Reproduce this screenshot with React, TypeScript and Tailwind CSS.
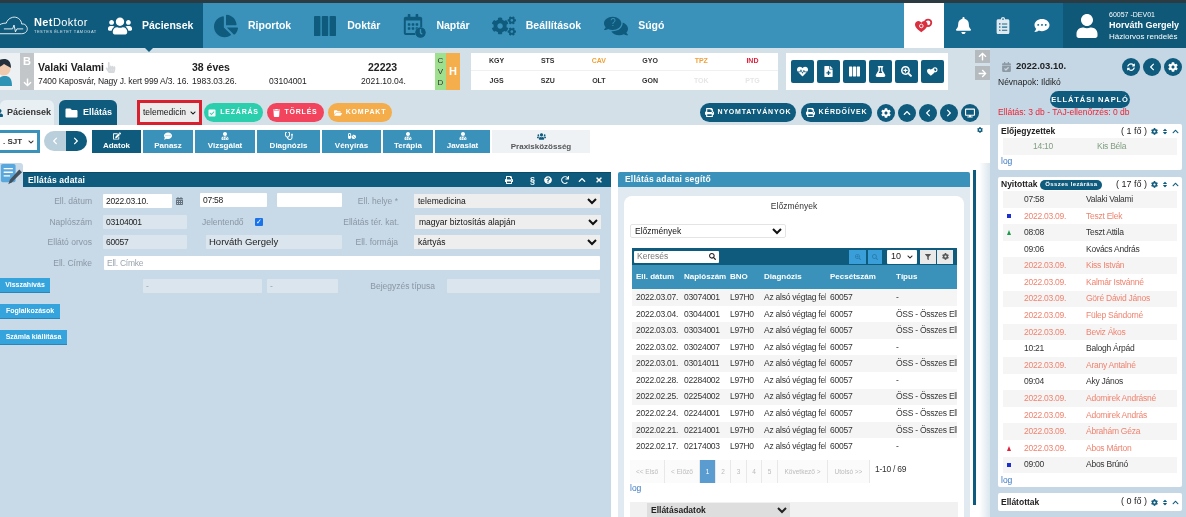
import {
  FaArrowDown,
  FaArrowRight,
  FaArrowUp,
  FaBell,
  FaCalendarAlt,
  FaCalendarCheck,
  FaChartPie,
  FaCheckSquare,
  FaChevronDown,
  FaChevronLeft,
  FaChevronRight,
  FaChevronUp,
  FaClipboardList,
  FaClock,
  FaCog,
  FaCogs,
  FaCommentDots,
  FaComments,
  FaDesktop,
  FaEdit,
  FaFileMedical,
  FaFilter,
  FaFlask,
  FaFolder,
  FaFolderOpen,
  FaHandPointer,
  FaHeartbeat,
  FaPills,
  FaPrint,
  FaQuestionCircle,
  FaRedo,
  FaRegCalendarAlt,
  FaSearch,
  FaSearchPlus,
  FaSort,
  FaStethoscope,
  FaSyncAlt,
  FaTimes,
  FaTrash,
  FaUser,
  FaUserMd,
  FaUsers,
} from "react-icons/fa";

const small = "text-[8.500px] tracking-[-0.25px]";

function Binders({ className }: { className?: string }) {
  return (
    <svg viewBox="0 0 24 24" className={className} fill="currentColor">
      <rect x="0" y="1" width="7" height="22" rx="1" />
      <rect x="8.5" y="1" width="7" height="22" rx="1" />
      <rect x="17" y="1" width="7" height="22" rx="1" />
    </svg>
  );
}

function Hearts({ className }: { className?: string }) {
  return (
    <svg viewBox="0 0 20 16" className={className} fill="currentColor">
      <path d="M7 15.500 C2 12 0 9.500 0 7 C0 4.500 2 3 3.800 3 C5.200 3 6.300 3.800 7 5 C7.700 3.800 8.800 3 10.200 3 C12 3 14 4.500 14 7 C14 9.500 12 12 7 15.500 Z" />
      <circle cx="14.500" cy="5" r="3.600" fill="none" stroke="currentColor" strokeWidth="2" />
      <circle cx="7" cy="8.500" r="2" fill="none" stroke="#fff" strokeWidth="1" />
    </svg>
  );
}

function NotesIcon() {
  return (
    <svg viewBox="0 0 24 24" className="w-[22px] h-[22px]">
      <rect x="1" y="0" width="16" height="20" rx="2" fill="#58a7dd" />
      <path d="M4 5 H14 M4 9 H14 M4 13 H11" stroke="#fff" strokeWidth="1.500" />
      <path d="M9 22 L11 17 L21 6 L24 9 L13 20 Z" fill="#44525e" />
    </svg>
  );
}

function Logo() {
  return (
    <div className="flex items-center w-[108px] text-white">
      <svg viewBox="0 0 30 24" className="w-[29px] h-[26px] shrink-0" fill="none" stroke="currentColor" strokeWidth="0.9">
        <path d="M-2 20 H22 C27 20 29 16.500 28 13.500 C27 10.500 24.500 9.500 22.500 10 C22 5 17.500 2 13 3 C9 4 7 7 6.500 9 C3 9 0 10 -2 12" />
        <path d="M4 15 H13 L14.500 11 L16 18 L17.500 15 H24" />
      </svg>
      <div className="ml-[5px] leading-none">
        <div className="text-[11px] tracking-[0.4px]">
          <span className="font-bold">Net</span>Doktor
        </div>
        <div className="text-[4px] tracking-[0.5px] mt-[2px] opacity-80 whitespace-nowrap">TESTES ÉLETET TÁMOGAT</div>
      </div>
    </div>
  );
}

function NavItem({ icon, label }: { icon: React.ReactNode; label: string }) {
  return (
    <div className="flex items-center text-[#0f5b7d]">
      <div className="w-[24px] flex justify-center">{icon}</div>
      <span className="ml-[10px] text-[10.500px] font-bold text-white">{label}</span>
    </div>
  );
}

function TopNav() {
  return (
    <header className="h-[48px] shrink-0 border-t-[3px] border-[#2c3a42] flex bg-[#3a92ba]">
      <div className="relative w-[203px] flex items-center bg-[#0f5b7d]">
        <Logo />
        <div className="flex items-center text-white">
          <FaUsers className="w-[24px] h-[24px]" />
          <span className="ml-[10px] text-[10.500px] font-bold">Páciensek</span>
        </div>
        <div className="absolute left-[145px] -bottom-[4px] w-0 h-0 border-x-[4px] border-x-transparent border-t-[4px] border-t-[#0f5b7d]" />
      </div>
      <nav className="flex items-center gap-[22px] pl-[11px] flex-1">
        <NavItem icon={<FaChartPie className="w-[24px] h-[24px]" />} label="Riportok" />
        <NavItem icon={<Binders className="w-[22px] h-[24px]" />} label="Doktár" />
        <NavItem
          icon={
            <span className="relative block w-[23px] h-[24px]">
              <FaRegCalendarAlt className="w-[20px] h-[21px]" />
              <FaClock className="absolute right-0 bottom-0 w-[11px] h-[11px] bg-[#3a92ba] rounded-full" />
            </span>
          }
          label="Naptár"
        />
        <NavItem icon={<FaCogs className="w-[24px] h-[24px]" />} label="Beállítások" />
        <div className="ml-[1px]">
          <NavItem
            icon={
              <span className="relative block">
                <FaComments className="w-[24px] h-[24px]" />
                <span className="absolute left-[6px] top-[3px] text-[10px] leading-[12px] text-[#3a92ba]">?</span>
              </span>
            }
            label="Súgó"
          />
        </div>
      </nav>
      <div className="w-[40px] bg-white flex items-center justify-center text-[#d9303f]">
        <Hearts className="w-[18px] h-[15px]" />
      </div>
      <div className="w-[119px] bg-[#176a8f] flex items-center text-white">
        <FaBell className="ml-[12px] w-[15px] h-[17px]" />
        <FaClipboardList className="ml-[25px] w-[14px] h-[17px] text-[#dfe9ef]" />
        <FaCommentDots className="ml-[24px] w-[16px] h-[15px]" />
      </div>
      <div className="w-[123px] bg-[#0f5878] flex items-center text-white">
        <FaUser className="ml-[12px] w-[24px] h-[24px] shrink-0" />
        <div className="ml-[10px] leading-none whitespace-nowrap pt-[1px]">
          <div className="text-[7px]">60057 -DEV01</div>
          <div className="text-[9px] font-bold mt-[3px]">Horváth Gergely</div>
          <div className="text-[8px] mt-[3px]">Háziorvos rendelés</div>
        </div>
      </div>
    </header>
  );
}

function Avatar() {
  return (
    <svg viewBox="0 0 20 37" className="w-[20px] h-[37px] shrink-0 bg-[#eef1f3]">
      <path d="M-3 33 C-3 25 1 23 5 23 C9 23 12 25 12 33 Z" fill="#2f93b5" />
      <circle cx="4" cy="16" r="6.500" fill="#f1c9ac" />
      <path d="M-3 15 C-3 7 0 6 4 6 C8 6 11 8 11 15 C9 14 6 12 4 11 C2 13 0 14 -3 15 Z" fill="#23303c" />
    </svg>
  );
}

function PatientStrip() {
  const topRow = [
    ["KGY", "text-[#333]"],
    ["STS", "text-[#333]"],
    ["CAV", "text-[#f0a13a]"],
    ["GYO", "text-[#333]"],
    ["TPZ", "text-[#f0a13a]"],
    ["IND", "text-[#e01f3a]"],
  ];
  const bottomRow = [
    ["JGS", "text-[#333]"],
    ["SZU", "text-[#333]"],
    ["OLT", "text-[#333]"],
    ["GON", "text-[#333]"],
    ["TOK", "text-[#e6e6e6]"],
    ["PTG", "text-[#e6e6e6]"],
  ];
  const tools = [FaHeartbeat, FaFileMedical, Binders, FaFlask, FaSearchPlus, Hearts];
  return (
    <div className="h-[46px] shrink-0 pt-[5px] flex bg-[#d3e0e8]">
      <div className="h-[37px] flex">
        <Avatar />
        <div className="w-[14px] bg-[#c3c6c8] flex flex-col items-center text-white">
          <span className="text-[11px] font-bold mt-[3px] leading-none">B</span>
          <FaArrowDown className="w-[9px] h-[9px] mt-[11px]" />
        </div>
        <div className="w-[401px] bg-white text-[#222] pl-[4px] pt-[8px]">
          <div className="flex text-[10.500px] font-bold leading-[13px]">
            <span className="w-[154px] flex items-center">
              Valaki Valami
              <FaHandPointer className="ml-[1px] w-[11px] h-[11px] text-[#d5d9dc]" />
            </span>
            <span className="w-[176px]">38 éves</span>
            <span>22223</span>
          </div>
          <div className="flex text-[8.500px] leading-[12px] mt-[1px] whitespace-nowrap">
            <span className="w-[151px] mr-[3px] overflow-hidden tracking-[-0.1px]">7400 Kaposvár, Nagy J. kert 999 A/3. 16.,</span>
            <span className="w-[77px]">1983.03.26.</span>
            <span className="w-[92px]">03104001</span>
            <span>2021.10.04.</span>
          </div>
        </div>
        <div className="w-[11px] bg-[#9fe08f] text-[#333] text-[8px] leading-[11px] flex flex-col items-center pt-[2px]">
          <span>C</span>
          <span>V</span>
          <span>D</span>
        </div>
        <div className="w-[14px] bg-[#f4ae4c] text-white text-[11px] font-bold flex items-center justify-center">H</div>
      </div>
      <div className="ml-[11px] w-[307px] h-[37px] bg-white flex flex-col text-[7px] font-bold">
        {[topRow, bottomRow].map((row, i) => (
          <div key={i} className={`h-[18px] grid grid-cols-6 items-center text-center ${i === 0 ? "border-b border-[#eef1f3]" : "mt-[1px]"}`}>
            {row.map(([label, color]) => (
              <span key={label} className={color}>
                {label}
              </span>
            ))}
          </div>
        ))}
      </div>
      <div className="ml-[8px] w-[162px] h-[37px] bg-white flex items-center gap-[3px] pl-[5px]">
        {tools.map((Icon, i) => (
          <div key={i} className="w-[23px] h-[23px] rounded-[2px] bg-[#0f5b7d] text-white flex items-center justify-center">
            <Icon className="w-[11px] h-[11px]" />
          </div>
        ))}
      </div>
      <div className="ml-[27px] w-[15px] flex flex-col gap-[3px] -mt-[3px]">
        <div className="h-[13px] bg-[#b4babd] text-white flex items-center justify-center">
          <FaArrowUp className="w-[9px] h-[9px]" />
        </div>
        <div className="h-[14px] bg-[#b4babd] text-white flex items-center justify-center">
          <FaArrowRight className="w-[9px] h-[9px]" />
        </div>
      </div>
    </div>
  );
}

function Pill({ color, icon, label, width }: { color: string; icon: React.ReactNode; label: string; width: string }) {
  return (
    <div className={`h-[19px] rounded-full flex items-center justify-center gap-[4px] text-white text-[7px] font-bold tracking-[0.8px] whitespace-nowrap ${color} ${width}`}>
      {icon}
      {label}
    </div>
  );
}

function Round({ children }: { children: React.ReactNode }) {
  return <div className="w-[18px] h-[18px] rounded-full bg-[#0f5b7d] text-white flex items-center justify-center">{children}</div>;
}

function Toolbar() {
  return (
    <div className="h-[31px] shrink-0 flex bg-[#d3e0e8] items-end">
      <div className="w-[54px] h-[25px] bg-[#e9f0f4] rounded-t-[6px] flex items-center gap-[4px] text-[9px] font-bold text-[#333] whitespace-nowrap overflow-hidden">
        <FaUser className="-ml-[4px] w-[7px] h-[8px] shrink-0 text-[#0f5b7d]" />
        Páciensek
      </div>
      <div className="ml-[5px] w-[58px] h-[25px] bg-[#0f5b7d] rounded-t-[6px] text-white flex items-center gap-[5px] pl-[6px] text-[9px] font-bold">
        <FaFolder className="w-[13px] h-[12px]" />
        Ellátás
      </div>
      <div className="ml-[20px] w-[65px] h-[25px] border-[3px] border-[#d8202e] bg-[#ececec] flex items-center justify-between px-[3px] overflow-hidden">
        <span className="text-[8.500px] text-[#111] whitespace-nowrap">telemedicin</span>
        <FaChevronDown className="w-[6px] h-[6px] shrink-0 text-[#111]" />
      </div>
      <div className="ml-[2px] mb-[3px] flex gap-[4px]">
        <Pill color="bg-[#2bcfae]" width="w-[59px]" icon={<FaCheckSquare className="w-[8px] h-[8px]" />} label="LEZÁRÁS" />
        <Pill color="bg-[#f2445c]" width="w-[57px]" icon={<FaTrash className="w-[7px] h-[8px]" />} label="TÖRLÉS" />
        <Pill color="bg-[#f4ad4a]" width="w-[64px]" icon={<FaFolderOpen className="w-[8px] h-[8px]" />} label="KOMPAKT" />
      </div>
      <div className="ml-[308px] mb-[3px] flex items-center">
        <Pill color="bg-[#0f5b7d]" width="w-[96px]" icon={<FaPrint className="w-[9px] h-[9px]" />} label="NYOMTATVÁNYOK" />
        <div className="ml-[5px]">
          <Pill color="bg-[#0f5b7d]" width="w-[71px]" icon={<FaPrint className="w-[9px] h-[9px]" />} label="KÉRDŐÍVEK" />
        </div>
        <div className="ml-[5px] flex gap-[3px]">
          <Round><FaCog className="w-[10px] h-[10px]" /></Round>
          <Round><FaChevronUp className="w-[8px] h-[8px]" /></Round>
          <Round><FaChevronLeft className="w-[8px] h-[8px]" /></Round>
          <Round><FaChevronRight className="w-[8px] h-[8px]" /></Round>
          <Round><FaDesktop className="w-[10px] h-[10px]" /></Round>
        </div>
      </div>
    </div>
  );
}

function SubTabs() {
  const tabs = [
    { label: "Adatok", w: "w-[49px]", icon: FaEdit, active: true },
    { label: "Panasz", w: "w-[50px]", icon: FaCommentDots },
    { label: "Vizsgálat", w: "w-[60px]", icon: FaUserMd },
    { label: "Diagnózis", w: "w-[63px]", icon: FaStethoscope },
    { label: "Vényírás", w: "w-[59px]", icon: FaPills },
    { label: "Terápia", w: "w-[50px]", icon: FaUserMd },
    { label: "Javaslat", w: "w-[55px]", icon: FaUserMd },
  ];
  return (
    <div className="mt-[5px] h-[23px] flex shrink-0">
      <div className="w-[40px] h-[23px] bg-[#3a92ba] p-[3px] pl-0">
        <div className="bg-white h-[17px] flex items-center overflow-hidden text-[8px] font-bold text-[#333] pl-[3px] justify-between pr-[3px]">
          . SJT <FaChevronDown className="w-[6px] h-[6px]" />
        </div>
      </div>
      <div className="ml-[4px] mt-[1px] h-[20px] w-[43px] flex rounded-full overflow-hidden">
        <div className="flex-1 bg-[#b9cfdb] text-white flex items-center justify-center">
          <FaChevronLeft className="w-[8px] h-[8px]" />
        </div>
        <div className="flex-1 bg-[#0f5b7d] text-white flex items-center justify-center">
          <FaChevronRight className="w-[8px] h-[8px]" />
        </div>
      </div>
      <div className="ml-[5px] flex gap-[2px]">
        {tabs.map(({ label, w, icon: Icon, active }) => (
          <div key={label} className={`${w} flex flex-col items-center justify-center text-white text-[8px] font-bold leading-[11px] ${active ? "bg-[#0f5b7d]" : "bg-[#3a92ba]"}`}>
            <Icon className="w-[8px] h-[8px]" />
            {label}
          </div>
        ))}
        <div className="w-[98px] bg-[#eef2f5] text-[#555] text-[8px] font-bold leading-[11px] flex flex-col items-center justify-center">
          <FaUsers className="w-[9px] h-[9px] text-[#0f5b7d]" />
          Praxisközösség
        </div>
      </div>
      <FaCog className="ml-[387px] mt-[-3px] w-[6px] h-[6px] text-[#0f5b7d]" />
    </div>
  );
}

function Label({ w, children }: { w: string; children: React.ReactNode }) {
  return <div className={`${w} text-right text-[8.500px] text-[#8b97a2] whitespace-nowrap`}>{children}</div>;
}

function Field({ w, value, white, dim, large }: { w: string; value?: string; white?: boolean; dim?: boolean; large?: boolean }) {
  return (
    <div className={`${w} h-[14px] flex items-center pl-[3px] rounded-[1px] whitespace-nowrap ${large ? "text-[9.500px]" : small} ${white ? "bg-white" : "bg-[#dbe5ee]"} ${dim ? "text-[#9aa5ae]" : "text-[#222]"}`}>
      {value}
    </div>
  );
}

function FormSelect({ value }: { value: string }) {
  return (
    <select defaultValue={value} className="ml-[16px] w-[186px] h-[14px] bg-[#efeeee] text-[8.500px] text-[#111] outline-none font-['Liberation_Sans',sans-serif]">
      <option>{value}</option>
    </select>
  );
}

function SideButton({ w, mt, children }: { w: string; mt: string; children: React.ReactNode }) {
  return (
    <div className={`${w} ${mt} h-[15px] bg-[#35a3dc] text-white text-[7px] font-bold flex items-center justify-center border-b border-[#2a86b8] whitespace-nowrap`}>
      {children}
    </div>
  );
}

function LeftPanel() {
  return (
    <section className="w-[611px] flex flex-col">
      <div className="flex h-[24px]">
        <div className="w-[23px] h-[24px] bg-[#c8d9e8] rounded-tr-[3px] flex items-center">
          <NotesIcon />
        </div>
        <div className="mt-[9px] flex-1 h-[15px] bg-[#0f5b7d] border-t border-[#0b4a66] text-white flex items-center px-[5px]">
          <span className="text-[8.500px] font-bold tracking-[0.2px]">Ellátás adatai</span>
          <div className="ml-auto flex items-center gap-[9px] mr-[3px]">
            <FaPrint className="w-[8px] h-[8px]" />
            <span className="ml-[8px] text-[9px] font-bold leading-none">§</span>
            <FaQuestionCircle className="w-[8px] h-[8px]" />
            <FaRedo className="w-[8px] h-[8px]" />
            <FaChevronUp className="w-[8px] h-[8px]" />
            <FaTimes className="w-[8px] h-[8px]" />
          </div>
        </div>
      </div>
      <div className="flex-1 bg-[#c8d9e8] flex flex-col">
        <div className="mt-[6px] flex items-center h-[16px]">
          <Label w="w-[92px]">Ell. dátum</Label>
          <div className="ml-[11px]"><Field w="w-[69px]" white value="2022.03.10." /></div>
          <div className="w-[15px] flex justify-center text-[#667480]"><FaCalendarAlt className="w-[7px] h-[8px]" /></div>
          <div className="ml-[13px] -mt-[2px]"><Field w="w-[67px]" white value="07:58" /></div>
          <div className="ml-[10px] -mt-[2px]"><Field w="w-[65px]" white /></div>
          <Label w="w-[56px]">Ell. helye *</Label>
          <FormSelect value="telemedicina" />
        </div>
        <div className="mt-[6px] flex items-center h-[14px]">
          <Label w="w-[92px]">Naplószám</Label>
          <div className="ml-[11px]"><Field w="w-[84px]" value="03104001" /></div>
          <div className="ml-[15px] w-[43px] text-[8.500px] text-[#8b97a2]">Jelentendő</div>
          <div className="ml-[10px] w-[8px] h-[8px] bg-[#1a73e8] rounded-[1px] text-white text-[7px] leading-[8px] text-center">✓</div>
          <Label w="w-[136px]">Ellátás tér. kat.</Label>
          <FormSelect value="magyar biztosítás alapján" />
        </div>
        <div className="mt-[6px] flex items-center h-[14px]">
          <Label w="w-[92px]">Ellátó orvos</Label>
          <div className="ml-[11px]"><Field w="w-[84px]" value="60057" /></div>
          <div className="ml-[19px]"><Field w="w-[136px]" value="Horváth Gergely" large /></div>
          <Label w="w-[56px]">Ell. formája</Label>
          <FormSelect value="kártyás" />
        </div>
        <div className="mt-[7px] flex items-center h-[14px]">
          <Label w="w-[92px]">Ell. Címke</Label>
          <div className="ml-[12px]"><Field w="w-[496px]" white dim value="Ell. Címke" /></div>
        </div>
        <div className="flex mt-[8px]">
          <SideButton w="w-[50px]" mt="mt-0">Visszahívás</SideButton>
          <div className="ml-[93px] mt-[1px] flex items-center">
            <Field w="w-[119px]" dim value="-" />
            <div className="ml-[5px]"><Field w="w-[71px]" dim value="-" /></div>
            <Label w="w-[97px]">Bejegyzés típusa</Label>
            <div className="ml-[12px]"><Field w="w-[153px]" /></div>
          </div>
        </div>
        <SideButton w="w-[60px]" mt="mt-[11px]">Foglalkozások</SideButton>
        <SideButton w="w-[67px]" mt="mt-[11px]">Számla kiállítása</SideButton>
      </div>
    </section>
  );
}

const history = [
  ["2022.03.07.", "03074001", "-"],
  ["2022.03.04.", "03044001", "ÖSS - Összes Ellátás"],
  ["2022.03.03.", "03034001", "ÖSS - Összes Ellátás"],
  ["2022.03.02.", "03024007", "-"],
  ["2022.03.01.", "03014011", "ÖSS - Összes Ellátás"],
  ["2022.02.28.", "02284002", "-"],
  ["2022.02.25.", "02254002", "ÖSS - Összes Ellátás"],
  ["2022.02.24.", "02244001", "ÖSS - Összes Ellátás"],
  ["2022.02.21.", "02214001", "ÖSS - Összes Ellátás"],
  ["2022.02.17.", "02174003", "-"],
];

const colW = ["w-[48px]", "w-[42px] mr-[4px]", "w-[34px]", "w-[62px] mr-[4px]", "w-[66px]", "w-[61px]"];

function HistoryTable() {
  const headers = ["Ell. dátum", "Naplószám", "BNO", "Diagnózis", "Pecsétszám", "Típus"];
  return (
    <div className="mt-[10px] ml-[8px] w-[325px]">
      <div className="h-[17px] bg-[#0f5b7d] flex items-center pl-[2px]">
        <div className="w-[85px] h-[12px] bg-white rounded-[1px] flex items-center justify-between px-[3px] text-[8.500px] text-[#777]">
          Keresés
          <FaSearch className="w-[7px] h-[7px] text-[#222]" />
        </div>
        <div className="ml-[130px] w-[17px] h-[14px] bg-[#3a9fd8] flex items-center justify-center text-[#2a7fb0]"><FaSearchPlus className="w-[6px] h-[6px]" /></div>
        <div className="ml-[2px] w-[14px] h-[14px] bg-[#3a9fd8] flex items-center justify-center text-[#2a7fb0]"><FaSearch className="w-[6px] h-[6px]" /></div>
        <div className="ml-[5px] w-[30px] h-[14px] bg-white rounded-[1px] flex items-center justify-between px-[4px] text-[9px] text-[#222]">
          10 <FaChevronDown className="w-[6px] h-[6px]" />
        </div>
        <div className="ml-[3px] w-[16px] h-[14px] bg-[#e9e9e9] flex items-center justify-center text-[#555]"><FaFilter className="w-[6px] h-[6px]" /></div>
        <div className="ml-[1px] w-[16px] h-[14px] bg-[#e9e9e9] flex items-center justify-center text-[#555]"><FaCog className="w-[7px] h-[7px]" /></div>
      </div>
      <div className="h-[24px] bg-[#3a92ba] flex items-center pl-[4px] text-white text-[8px] font-bold">
        {headers.map((h, i) => (
          <div key={h} className={`${colW[i]} overflow-hidden whitespace-nowrap`}>{h}</div>
        ))}
      </div>
      {history.map(([date, log, type], r) => (
        <div key={log} className={`h-[16.600px] flex items-center pl-[4px] text-[#333] whitespace-nowrap ${small} ${r % 2 === 0 ? "bg-[#f5f5f5]" : "bg-white"}`}>
          <div className={colW[0]}>{date}</div>
          <div className={colW[1]}>{log}</div>
          <div className={colW[2]}>L97H0</div>
          <div className={`${colW[3]} overflow-hidden`}>Az alsó végtag felszíni</div>
          <div className={colW[4]}>60057</div>
          <div className={`${colW[5]} overflow-hidden`}>{type}</div>
        </div>
      ))}
    </div>
  );
}

function Pagination() {
  const pages = [
    ["<< Első", "w-[35px]"],
    ["< Előző", "w-[35px]"],
    ["1", "w-[16px]"],
    ["2", "w-[15px]"],
    ["3", "w-[16px]"],
    ["4", "w-[15px]"],
    ["5", "w-[16px]"],
    ["Következő >", "w-[50px]"],
    ["Utolsó >>", "w-[42px]"],
  ];
  return (
    <div className="mt-[5px] ml-[6px] flex">
      {pages.map(([label, w]) => (
        <div key={label} className={`${w} h-[23px] flex items-center justify-center text-[6.500px] whitespace-nowrap border-r border-[#e8e8e8] ${label === "1" ? "bg-[#5a9bd0] text-white" : "bg-[#fbfbfb] text-[#bbb]"}`}>
          {label}
        </div>
      ))}
      <span className={`ml-[5px] mt-[3px] text-[#333] ${small}`}>1-10 / 69</span>
    </div>
  );
}

function RightPanel() {
  return (
    <section className="ml-[7px] w-[352px] flex flex-col">
      <div className="mt-[9px] h-[15px] bg-[#3a92ba] rounded-t-[2px] text-white text-[8.500px] font-bold tracking-[0.2px] flex items-center pl-[7px]">
        Ellátás adatai segítő
      </div>
      <div className="flex-1 bg-[#e0eaf0] pt-[9px] px-[6px] overflow-hidden">
        <div className="bg-white rounded-t-[8px] h-[330px] overflow-hidden">
          <div className="pt-[5px] text-center text-[8.500px] text-[#333] leading-[11px]">Előzmények</div>
          <select defaultValue="Előzmények" className="ml-[6px] mt-[12px] w-[156px] h-[14px] rounded-[2px] border border-[#e4e4e4] text-[8.500px] text-[#111] outline-none block font-['Liberation_Sans',sans-serif]">
            <option>Előzmények</option>
          </select>
          <HistoryTable />
          <Pagination />
          <div className="ml-[6px] text-[8.500px] text-[#3b78c2] leading-[10px]">log</div>
          <div className="mt-[9px] ml-[6px] w-[328px] h-[20px] bg-[#f1f1f1] pl-[17px] pt-[1px]">
            <select defaultValue="Ellátásadatok" className="block w-[143px] h-[14px] bg-[#dedede] text-[8.500px] font-bold text-[#222] outline-none font-['Liberation_Sans',sans-serif]">
              <option>Ellátásadatok</option>
            </select>
          </div>
        </div>
      </div>
    </section>
  );
}

function CardHeader({ title, count, badge }: { title: string; count: string; badge?: boolean }) {
  return (
    <div className="h-[13px] flex items-center text-[8.500px] text-[#222] font-bold px-[3px]">
      <span>{title}</span>
      {badge && <span className="ml-[3px] h-[10px] w-[62px] rounded-full bg-[#0f5b7d] text-white text-[6px] tracking-[0.4px] flex items-center justify-center">Összes lezárása</span>}
      <span className="ml-auto text-[9px] font-normal">{count}</span>
      <FaCog className="ml-[4px] w-[7px] h-[7px] text-[#0f5b7d]" />
      <FaSort className="ml-[4px] w-[6px] h-[7px] text-[#0f5b7d]" />
      <FaChevronUp className="ml-[4px] w-[7px] h-[7px] text-[#0f5b7d]" />
    </div>
  );
}

type Open = { time: string; name: string; mark?: "blue" | "green" | "red" };

const opened: Open[] = [
  { time: "07:58", name: "Valaki Valami" },
  { time: "2022.03.09.", name: "Teszt Elek", mark: "blue" },
  { time: "08:08", name: "Teszt Attila", mark: "green" },
  { time: "09:06", name: "Kovács András" },
  { time: "2022.03.09.", name: "Kiss István" },
  { time: "2022.03.09.", name: "Kalmár Istvánné" },
  { time: "2022.03.09.", name: "Göré Dávid János" },
  { time: "2022.03.09.", name: "Fülep Sándorné" },
  { time: "2022.03.09.", name: "Beviz Ákos" },
  { time: "10:21", name: "Balogh Árpád" },
  { time: "2022.03.09.", name: "Arany Antalné" },
  { time: "09:04", name: "Aky János" },
  { time: "2022.03.09.", name: "Adomirek Andrásné" },
  { time: "2022.03.09.", name: "Adomirek András" },
  { time: "2022.03.09.", name: "Ábrahám Géza" },
  { time: "2022.03.09.", name: "Abos Márton", mark: "red" },
  { time: "09:00", name: "Abos Brúnó", mark: "blue" },
];

function Mark({ kind }: { kind?: Open["mark"] }) {
  if (kind === "blue") return <div className="w-[4px] h-[4px] bg-[#1c2fd0]" />;
  if (kind === "green") return <div className="w-0 h-0 border-x-[2.500px] border-x-transparent border-b-[5px] border-b-[#1f9a4c]" />;
  if (kind === "red") return <div className="w-0 h-0 border-x-[2.500px] border-x-transparent border-b-[5px] border-b-[#e0203a]" />;
  return null;
}

function Sidebar() {
  return (
    <aside className="w-[196px] bg-[#c5d7e5] flex flex-col pl-[8px] pr-[4px] overflow-hidden">
      <div className="h-[27px] mt-[5px] flex items-center">
        <FaCalendarCheck className="ml-[4px] w-[9px] h-[10px] text-[#8d99a3]" />
        <span className="ml-[5px] text-[9.500px] font-bold text-[#222]">2022.03.10.</span>
        <div className="ml-auto flex gap-[3px]">
          <Round><FaSyncAlt className="w-[8px] h-[8px]" /></Round>
          <Round><FaChevronLeft className="w-[8px] h-[8px]" /></Round>
          <Round><FaCog className="w-[10px] h-[10px]" /></Round>
        </div>
      </div>
      <div className="text-[8.500px] text-[#222] leading-[11px] -mt-[3px]">Névnapok: Ildikó</div>
      <div className="ml-[52px] mt-[3px] w-[80px] h-[17px] rounded-full bg-[#0f5b7d] text-white text-[7.500px] font-bold tracking-[0.9px] flex items-center justify-center">
        ELLÁTÁSI NAPLÓ
      </div>
      <div className="-mt-[1px] text-[8.500px] leading-[11px] text-[#ee2233] whitespace-nowrap">Ellátás: 3 db - TAJ-ellenőrzés: 0 db</div>
      <div className="mt-[6px] h-[46px] bg-white rounded-[2px] pt-[1px] shrink-0">
        <CardHeader title="Előjegyzettek" count="( 1 fő )" />
        <div className={`mx-[5px] h-[17px] bg-[#f5f5f5] flex items-center text-[#7f9f7f] ${small}`}>
          <span className="ml-[30px] w-[64px]">14:10</span>
          <span>Kis Béla</span>
        </div>
        <div className="ml-[3px] mt-[1px] text-[8.500px] text-[#3b78c2] leading-[11px]">log</div>
      </div>
      <div className="mt-[7px] h-[310px] bg-white rounded-[2px] pt-[1px] shrink-0">
        <CardHeader title="Nyitottak" count="( 17 fő )" badge />
        {opened.map((row, i) => {
          const old = row.time.startsWith("2022");
          return (
            <div key={row.name} className={`mx-[5px] h-[16.600px] flex items-center ${small} ${i % 2 === 0 ? "bg-[#f5f5f5]" : "bg-white"} ${old ? "text-[#f0836f]" : "text-[#333]"}`}>
              <div className="w-[12px] flex justify-center"><Mark kind={row.mark} /></div>
              <span className="ml-[9px] w-[62px]">{row.time}</span>
              <span>{row.name}</span>
            </div>
          );
        })}
        <div className="ml-[3px] mt-[2px] text-[8.500px] text-[#3b78c2] leading-[11px]">log</div>
      </div>
      <div className="mt-[6px] h-[18px] bg-white rounded-[2px] flex items-center shrink-0">
        <div className="w-full"><CardHeader title="Ellátottak" count="( 0 fő )" /></div>
      </div>
    </aside>
  );
}

export default function App() {
  return (
    <div className="w-[1186px] h-[517px] overflow-hidden flex flex-col bg-white font-['Liberation_Sans',Arial,sans-serif] blur-[0.3px]">
      <TopNav />
      <div className="flex flex-1 min-h-0">
        <div className="w-[990px] flex flex-col">
          <PatientStrip />
          <Toolbar />
          <div className="flex-1 min-h-0 bg-white flex flex-col">
            <SubTabs />
            <div className="flex flex-1 min-h-0 mt-[10px]">
              <LeftPanel />
              <RightPanel />
              <div className="ml-[3px] w-[3px] mt-[7px] mb-[12px] bg-[#0f5b7d]" />
              <div className="ml-[3px] flex-1 bg-gradient-to-r from-white to-[#dbe6ee]" />
            </div>
          </div>
        </div>
        <Sidebar />
      </div>
    </div>
  );
}
